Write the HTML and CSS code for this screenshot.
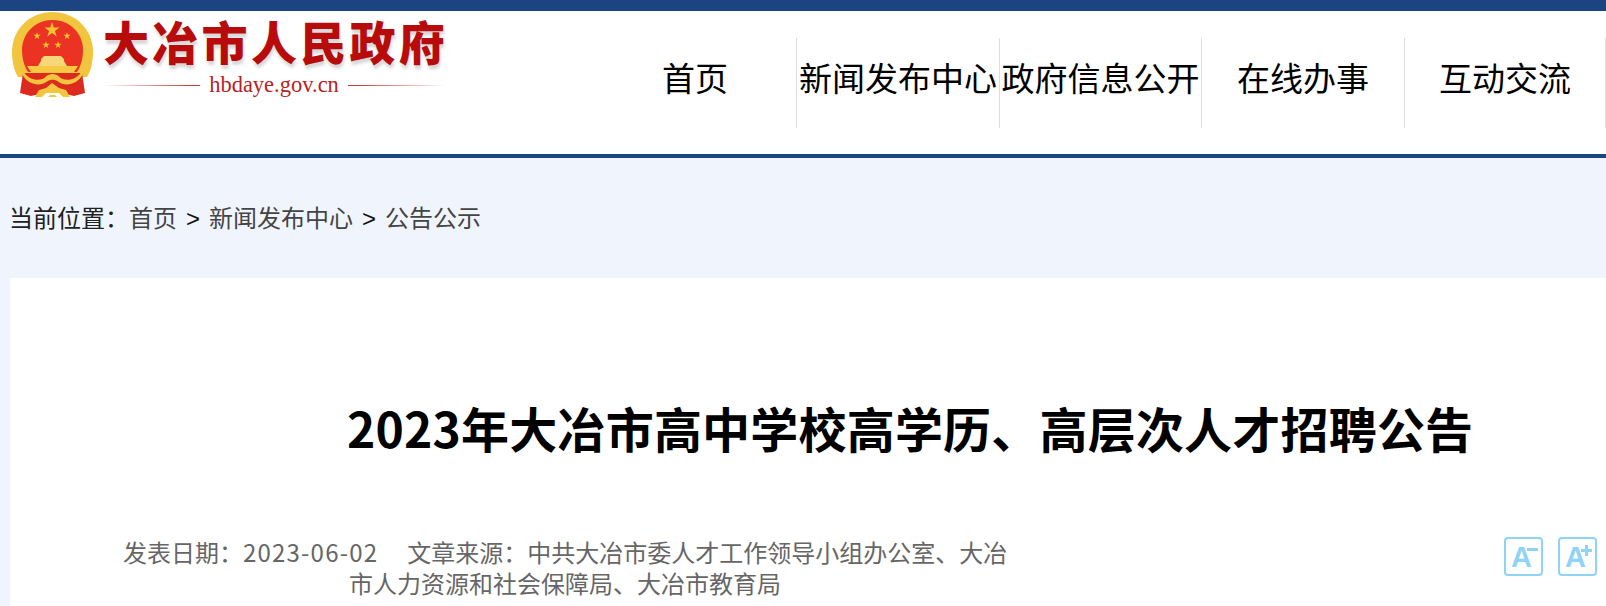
FILE: index.html
```html
<!DOCTYPE html>
<html lang="zh-CN">
<head>
<meta charset="utf-8">
<title>2023年大冶市高中学校高学历、高层次人才招聘公告</title>
<link rel="stylesheet" href="styles.css">
</head>
<body>
<div class="topbar"></div>
<header class="header">
  <a class="logo" href="#">
    <svg class="emblem" viewBox="0 0 84 88" width="84" height="88" aria-hidden="true">
      <defs>
        <polygon id="s" points="0,-1 .225,-.309 .951,-.309 .363,.118 .588,.809 0,.382 -.588,.809 -.363,.118 -.951,-.309 -.225,-.309"/>
      </defs>
      <path d="M7 66 C3 60 1 50 1 41 C1 18 19 1 41.500 1 C64 1 82 18 82 41 C82 50 80 60 76 66 Z" fill="#f2c53f"/>
      <path d="M17 61 C13 55 11 47 11 39 C11 22 24.500 9 41.500 9 C58.500 9 72 22 72 39 C72 47 70 55 66 61 Z" fill="#ea3323"/>
      <path d="M12 62 L9 82 L20 85 L33 82 L50 82 L63 85 L74 82 L71 62 Z" fill="#dd2a1e"/>
      <use href="#s" transform="translate(41 19) scale(8)" fill="#f5c531"/>
      <use href="#s" transform="translate(26 25) scale(3.800)" fill="#f5c531"/>
      <use href="#s" transform="translate(56 25) scale(3.800)" fill="#f5c531"/>
      <use href="#s" transform="translate(35 34) scale(3.800)" fill="#f5c531"/>
      <use href="#s" transform="translate(47 34) scale(3.800)" fill="#f5c531"/>
      <path d="M30 48 L33 45 L50 45 L53 48 L53 50 L56 55 L27 55 L30 50 Z" fill="#f7d878"/>
      <path d="M16 55 L67 55 L63 61 L20 61 Z" fill="#f6ca42"/>
      <path d="M12 60 C18 70 30 71 35 65.500 C38 62 45 62 48 65.500 C53 71 65 70 71 60 L72 63 C66 74 54 76 47 70.500 C44 68 39 68 36 70.500 C29 76 17 74 11 63 Z" fill="#f3c63f"/>
      <path d="M24 86 L28 79 L35 77 L41 72 L48 77 L55 79 L59 86 L52 86 L48 82 L35 82 L31 86 Z" fill="#f3c63f"/>
      <path d="M37 86 L39 84 L44 84 L46 86 Z" fill="#f3c63f"/>
    </svg>
    <div class="logo-text">
      <div class="logo-name">大冶市人民政府</div>
      <div class="logo-domain"><i class="rule rule-left"></i><span>hbdaye.gov.cn</span><i class="rule rule-right"></i></div>
    </div>
  </a>
  <nav class="nav">
    <a class="nav-item" href="#">首页</a>
    <a class="nav-item" href="#">新闻发布中心</a>
    <a class="nav-item nav-item-narrow" href="#">政府信息公开</a>
    <a class="nav-item" href="#">在线办事</a>
    <a class="nav-item nav-item-last" href="#">互动交流</a>
  </nav>
</header>
<div class="crumbs">
  <span class="crumb-label">当前位置：</span><a href="#">首页</a><span class="sep">&gt;</span><a href="#">新闻发布中心</a><span class="sep">&gt;</span><a href="#">公告公示</a>
</div>
<main class="card">
  <h1 class="title">2023年大冶市高中学校高学历、高层次人才招聘公告</h1>
  <div class="meta-row">
    <p class="meta"><span class="date">发表日期：<span class="digits">2023-06-02</span></span><span>文章来源：中共大冶市委人才工作领导小组办公室、大冶</span><br><span>市人力资源和社会保障局、大冶市教育局</span></p>
    <div class="sizers">
      <button class="sizer sizer-minus" type="button">A</button>
      <button class="sizer sizer-plus" type="button">A</button>
    </div>
  </div>
</main>
</body>
</html>
```
FILE: styles.css
```css
* { box-sizing: border-box; }
html, body { margin: 0; padding: 0; }
body {
  height: 606px;
  overflow: hidden;
  background: #f0f5fd;
  font-family: "Noto Sans CJK SC", "Liberation Sans", sans-serif;
}
a { color: inherit; text-decoration: none; }

.topbar { height: 11px; background: #1c4483; }

.header {
  height: 147px;
  display: flex;
  justify-content: space-between;
  background: #fff;
  border-bottom: 4px solid #1c4483;
}
.logo { display: flex; align-items: flex-start; padding-left: 11px; }
.emblem { display: block; }
.logo-text { margin-left: 8px; width: 342px; }
.logo-name {
  margin-top: 1px;
  font-size: 46px;
  line-height: 56px;
  font-weight: 900;
  letter-spacing: 3.3px;
  color: #b80b0b;
  white-space: nowrap;
  text-shadow: 1px 4px 3px #d8d8d8;
}
.logo-domain {
  display: flex;
  align-items: center;
  gap: 9px;
  margin-top: 5px;
  font-family: "Liberation Serif", serif;
  font-size: 22.5px;
  line-height: 24px;
  color: #b82222;
}
.rule { flex: 1; height: 1px; }
.rule-left { background: linear-gradient(to right, #fff, #d0393a 90%); }
.rule-right { background: linear-gradient(to left, #fff, #d0393a 90%); }

.nav { display: flex; align-items: flex-start; padding-top: 27px; }
.nav-item {
  width: 203px;
  height: 90px;
  padding-bottom: 12px;
  display: flex;
  align-items: center;
  justify-content: center;
  font-size: 33px;
  color: #000;
  white-space: nowrap;
  border-right: 1px solid #dedede;
}
.nav-item-narrow { width: 202px; }
.nav-item-last { width: 201px; }

.crumbs {
  height: 120px;
  padding: 41px 0 0 9px;
  font-size: 24px;
  line-height: 36px;
  color: #444;
}
.crumb-label { color: #222; }
.sep { margin: 0 9px; color: #111; font-family: "Liberation Sans", sans-serif; }

.card {
  margin-left: 10px;
  height: 328px;
  background: #fff;
}
.title {
  margin: 0;
  padding: 113px 0 0 337px;
  font-size: 48px;
  line-height: 72px;
  font-weight: 700;
  letter-spacing: .2px;
  color: #000;
  white-space: nowrap;
}
.meta-row {
  display: flex;
  align-items: flex-start;
  justify-content: space-between;
  padding: 73px 9px 0 113px;
}
.meta {
  margin: 0;
  width: 884px;
  font-size: 24px;
  line-height: 31px;
  color: #666;
  text-align: center;
  white-space: nowrap;
}
.date { margin-right: 29px; }
.digits { letter-spacing: 1.2px; }
.sizers { display: flex; gap: 15px; margin-top: 1px; }
.sizer {
  position: relative;
  width: 39px;
  height: 39px;
  padding: 1px 0 0 5px;
  border: 2px solid #8fd3f6;
  border-radius: 4px;
  background: #fff;
  color: #8fd3f6;
  font-family: "Liberation Sans", sans-serif;
  font-size: 29px;
  line-height: 33px;
  font-weight: 700;
  text-align: left;
}
.sizer-minus::after {
  content: "";
  position: absolute;
  top: 9px;
  right: 3px;
  width: 11px;
  height: 3px;
  background: #8fd3f6;
}
.sizer-plus::after {
  content: "";
  position: absolute;
  top: 6px;
  right: 3px;
  width: 11px;
  height: 11px;
  background:
    linear-gradient(#8fd3f6, #8fd3f6) center / 11px 3px no-repeat,
    linear-gradient(#8fd3f6, #8fd3f6) center / 3px 11px no-repeat;
}
```
